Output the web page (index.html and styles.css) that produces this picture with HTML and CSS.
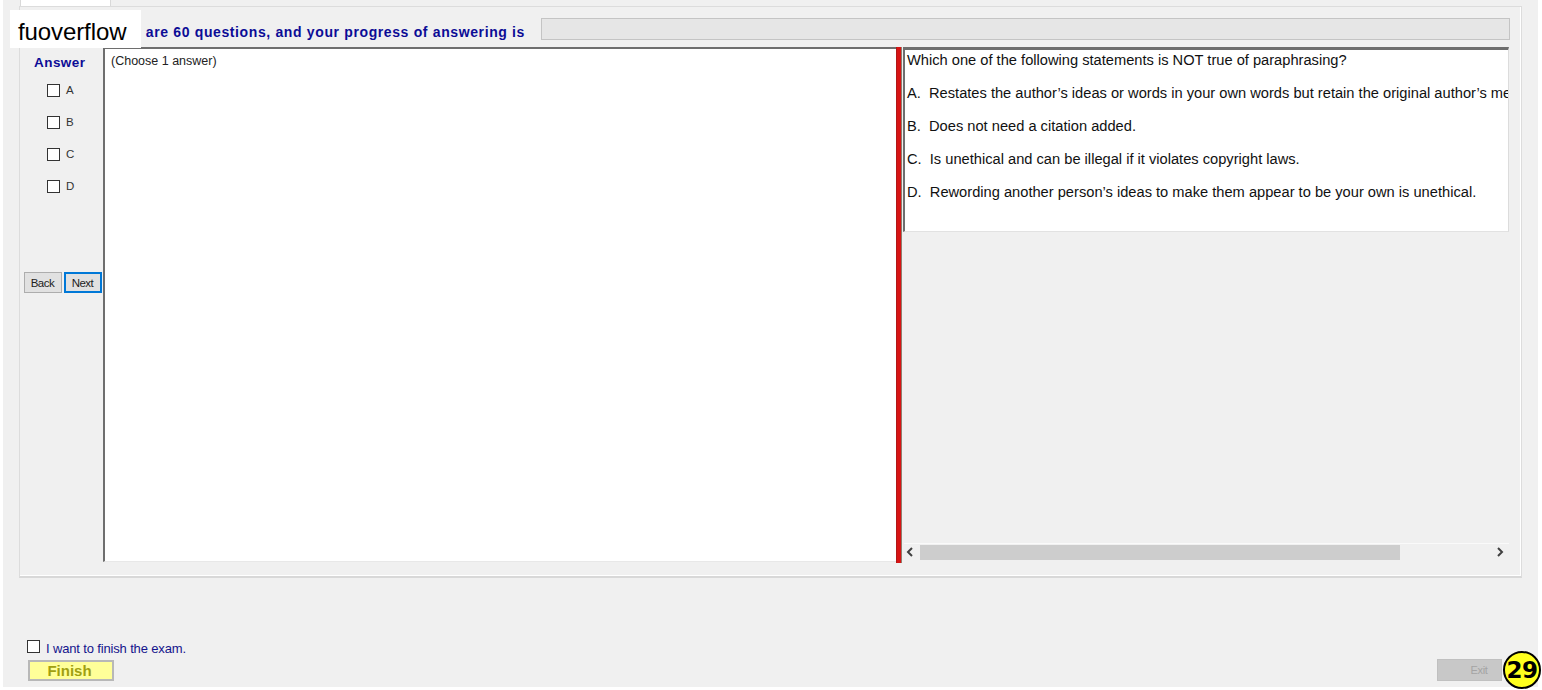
FILE: index.html
```html
<!DOCTYPE html>
<html lang="en">
<head>
<meta charset="utf-8">
<title>Exam</title>
<link rel="stylesheet" href="styles.css">
</head>
<body>
<div class="window">
  <div class="tabstrip"><div class="tab"></div></div>
  <div class="panel">
    <div class="header">
      <div class="header-text">There are 60 questions, and your progress of answering is</div>
      <div class="progress"></div>
    </div>
    <div class="main">
      <div class="answers">
        <div class="answer-title">Answer</div>
        <div class="options">
          <label class="option"><span class="check"></span><span>A</span></label>
          <label class="option"><span class="check"></span><span>B</span></label>
          <label class="option"><span class="check"></span><span>C</span></label>
          <label class="option"><span class="check"></span><span>D</span></label>
        </div>
        <div class="nav">
          <div class="btn">Back</div>
          <div class="btn btn-focus">Next</div>
        </div>
      </div>
      <div class="question-pane">(Choose 1 answer)</div>
      <div class="splitter"></div>
      <div class="right-pane">
        <div class="statement">
          <p>Which one of the following statements is NOT true of paraphrasing?</p>
          <p>A.&nbsp; Restates the author’s ideas or words in your own words but retain the original author’s meaning.</p>
          <p>B.&nbsp; Does not need a citation added.</p>
          <p>C.&nbsp; Is unethical and can be illegal if it violates copyright laws.</p>
          <p>D.&nbsp; Rewording another person’s ideas to make them appear to be your own is unethical.</p>
        </div>
        <div class="scrollbar">
          <svg class="arrow" viewBox="0 0 8 10" width="8" height="10"><path d="M6 1 L2 5 L6 9" fill="none" stroke="#404040" stroke-width="2"/></svg>
          <div class="track"><div class="thumb"></div></div>
          <svg class="arrow" viewBox="0 0 8 10" width="8" height="10"><path d="M2 1 L6 5 L2 9" fill="none" stroke="#404040" stroke-width="2"/></svg>
        </div>
      </div>
    </div>
  </div>
  <div class="footer">
    <div class="finish-group">
      <label class="finish-check"><span class="check"></span><span>I want to finish the exam.</span></label>
      <div class="finish-btn">Finish</div>
    </div>
    <div class="exit-btn">Exit</div>
  </div>
</div>
<div class="watermark">fuoverflow</div>
<div class="badge">29</div>
</body>
</html>
```

FILE: styles.css
```css
* { box-sizing: border-box; }
html, body { margin: 0; padding: 0; background: #fff; }
body {
  width: 1542px;
  height: 690px;
  overflow: hidden;
  position: relative;
  font-family: "Liberation Sans", Arial, sans-serif;
}
p { margin: 0; }
.window {
  width: 1535px;
  height: 687px;
  margin-left: 3px;
  background: #f0f0f0;
  display: flex;
  flex-direction: column;
}
.tabstrip { height: 6px; padding-left: 17px; }
.tab {
  width: 91px;
  height: 6px;
  background: #fff;
  border: 1px solid #d9d9d9;
  border-top: 0;
  border-bottom: 0;
}
.panel {
  width: 1503px;
  height: 572px;
  margin-left: 16px;
  border: 1px solid #dcdcdc;
  border-bottom: 2px solid #d8d8d8;
  box-shadow: inset 0 -1px 0 #fff, inset -1px 0 0 #fff;
  padding: 0 0 0 4px;
}
.header {
  display: flex;
  align-items: flex-start;
  height: 40px;
  padding-top: 11px;
}
.header-text {
  width: 501px;
  margin: 6px 16px 0 0;
  display: flex;
  justify-content: flex-end;
  font-size: 14px;
  line-height: 16px;
  font-weight: bold;
  color: #0c0c96;
  white-space: nowrap;
  letter-spacing: 0.6px;
  word-spacing: 0.2px;
}
.progress {
  width: 969px;
  height: 22px;
  background: #e6e6e6;
  border: 1px solid #c4c4c4;
}
.main {
  display: flex;
  height: 516px;
}
.answers { width: 79px; flex: none; }
.answer-title {
  font-size: 13.5px;
  font-weight: bold;
  color: #0c0c96;
  letter-spacing: 0.45px;
  margin: 8px 0 0 10px;
  line-height: 16px;
}
.options {
  display: flex;
  flex-direction: column;
  gap: 19px;
  margin: 13px 0 0 23px;
}
.option {
  display: flex;
  gap: 6px;
  height: 13px;
  font-size: 11.5px;
  line-height: 13px;
  color: #333;
}
.check {
  display: block;
  flex: none;
  width: 13px;
  height: 13px;
  background: #fff;
  border: 1px solid #333;
}
.nav {
  display: flex;
  gap: 2px;
  margin-top: 79px;
}
.btn {
  width: 38px;
  height: 21px;
  background: #e1e1e1;
  border: 1px solid #adadad;
  font-size: 11.5px;
  line-height: 21px;
  padding-right: 1px;
  text-align: center;
  color: #222;
  letter-spacing: -0.5px;
}
.btn-focus { border: 2px solid #0078d7; line-height: 19px; }
.question-pane {
  width: 793px;
  flex: none;
  background: #fff;
  border-top: 2px solid #6e6e6e;
  border-left: 2px solid #6e6e6e;
  border-bottom: 1px solid #e8e8e8;
  padding: 5px 0 0 6px;
  font-size: 12.5px;
  line-height: 14px;
  color: #222;
  height: 515px;
}
.splitter {
  width: 6px;
  flex: none;
  height: 516px;
  background: #d81414;
  border-left: 1px solid #b01818;
  border-right: 1px solid #8f7f70;
}
.right-pane {
  width: 607px;
  flex: none;
  display: flex;
  flex-direction: column;
  height: 515px;
}
.statement {
  height: 185px;
  background: #fff;
  border-top: 3px solid #6e6e6e;
  border-left: 2px solid #6e6e6e;
  border-right: 1px solid #dcdcdc;
  border-bottom: 1px solid #e2e2e2;
  overflow: hidden;
  white-space: nowrap;
  padding-left: 2px;
  margin-left: 1px;
  font-size: 14.67px;
  line-height: 33px;
  color: #111;
  margin-bottom: 311px;
}
.statement p { height: 33px; margin-top: -6px; margin-bottom: 6px; }
.scrollbar {
  display: flex;
  align-items: center;
  height: 17px;
  margin-left: 2px;
  padding: 0 5px 0 2px;
  background: #f0f0f0;
  border-top: 1px solid #fafafa;
}
.arrow { flex: none; }
.track { flex: 1; height: 15px; padding-left: 6px; }
.thumb { width: 480px; height: 15px; background: #cdcdcd; }
.footer {
  display: flex;
  justify-content: space-between;
  align-items: flex-end;
  flex: 1;
  padding: 0 36px 6px 24px;
}
.finish-group { display: flex; flex-direction: column; }
.finish-check {
  display: flex;
  gap: 6px;
  height: 20px;
  font-size: 13px;
  line-height: 17px;
  color: #14148c;
  letter-spacing: -0.15px;
}
.finish-btn {
  width: 86px;
  height: 21px;
  margin-left: 1px;
  background: #ffff99;
  border: 2px solid #b8b8b8;
  font-size: 15px;
  font-weight: bold;
  line-height: 18px;
  padding-right: 3px;
  text-align: center;
  color: #a0a010;
}
.exit-btn {
  width: 65px;
  height: 22px;
  background: #c8c8c8;
  border: 1px solid #c0c0c0;
  color: #a4a4a4;
  font-size: 11px;
  line-height: 20px;
  padding-left: 19px;
  text-align: center;
  letter-spacing: -0.3px;
}
.watermark {
  position: absolute;
  left: 10px;
  top: 10px;
  width: 131px;
  height: 38px;
  background: #fff;
  padding-left: 8px;
  font-size: 24px;
  line-height: 43px;
  letter-spacing: -0.1px;
  color: #000;
}
.badge {
  position: absolute;
  left: 1503px;
  top: 651px;
  width: 38px;
  height: 38px;
  border-radius: 50%;
  background: #ffff1e;
  border: 2px solid #000;
  font-family: "DejaVu Sans", sans-serif;
  font-size: 23px;
  font-weight: bold;
  line-height: 34px;
  text-align: center;
  letter-spacing: -0.5px;
  color: #000;
}
```
